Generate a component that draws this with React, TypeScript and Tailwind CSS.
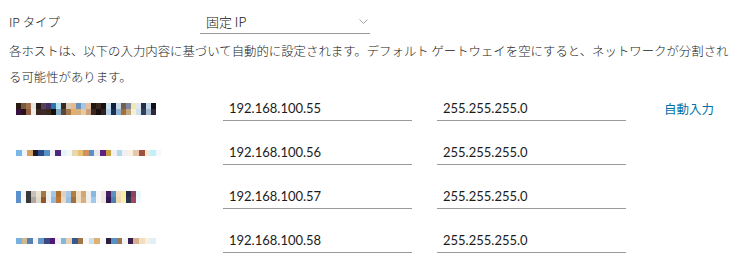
import React from "react"

const jp = "font-['Noto_Sans_CJK_JP',sans-serif] font-light"
const latin = "font-['Lato','Noto_Sans_CJK_JP',sans-serif]"

type Host = { ip: string; mask: string; top: string[]; bottom: string[] }

const hosts: Host[] = [
    {
        ip: "192.168.100.55",
        mask: "255.255.255.0",
        top: ["#2a1a14", "#7a5a3c", "#a07050", "#e8e4e0", "#201818", "#5a4050", "#40306a", "#2a78a8", "#b8e4f0", "#3a2a20", "#d8c8b0", "#e8b888", "#6890b8", "#a0c8e8", "#e8c0a0", "#201810", "#3a2820", "#181010", "#c8e0f0", "#102040", "#c8d8e8", "#706050", "#8088a0", "#f0e8b0", "#e0e8f0", "#203048", "#c8d8e8", "#101018"],
        bottom: ["#3a1040", "#2a1018", "#906040", "#f0ece8", "#3a2820", "#402830", "#3a2818", "#101010", "#80a8c0", "#5a4840", "#a87848", "#e0b070", "#d8b080", "#e8c8a0", "#c8a080", "#3a2820", "#181010", "#302020", "#b0d0e8", "#183050", "#90b0d0", "#a07040", "#c0a880", "#f8f0d0", "#d0e0f0", "#304058", "#a0b8d0", "#302838"],
    },
    {
        ip: "192.168.100.56",
        mask: "255.255.255.0",
        top: ["#78b8e8", "#f0f4f8", "#d8a060", "#1a1a2a", "#2a4a8a", "#5890c8", "#f0f4f8", "#502878", "#e0f4fa", "#f0f8f8", "#e8d8b0", "#e8c070", "#d09060", "#5890c8", "#e8e8e8", "#602080", "#c8a040", "#f0f0f0", "#b0d8f0", "#f0f0f0", "#f8f0e0", "#e8c8a8", "#a05040", "#f8e8d0", "#c0f0f8", "#f4f8fa"],
        bottom: [],
    },
    {
        ip: "192.168.100.57",
        mask: "255.255.255.0",
        top: ["#5890d0", "#f4f4f4", "#383838", "#c8c0b8", "#e8e0d0", "#a07840", "#f0f0f0", "#a0c8e8", "#b07030", "#e0d0c0", "#a8c8e8", "#b08040", "#f0e0c8", "#d0a870", "#f0f0f0", "#88b8e0", "#f8f8f8", "#f0e8e0", "#402060", "#6090c0", "#f0e0c0", "#f8f0a0", "#282848", "#904060", "#e8f8fa"],
        bottom: ["#6090c8", "#f8f8f8", "#383838", "#b0a8a0", "#e0d8c8", "#905828", "#f0f0f0", "#90b8e0", "#c07830", "#e8d8c8", "#98c0e0", "#a07040", "#f0e0c8", "#d8b080", "#f0f0f0", "#a0c8e8", "#f8f8f8", "#f0e8e0", "#301850", "#5080b0", "#f0d8b0", "#f8f0b0", "#303050", "#a04860", "#f0fafc"],
    },
    {
        ip: "192.168.100.58",
        mask: "255.255.255.0",
        top: ["#78b0e0", "#d0b890", "#5880b0", "#f4f4f4", "#6898c8", "#3a4a80", "#501878", "#f0f0f0", "#80b8e0", "#e8d0b0", "#3a5890", "#a07848", "#f8f8f8", "#c8e0f0", "#e0b070", "#f8f8f8", "#2a2040", "#5890c8", "#a07850", "#f4f4f4", "#3a2050", "#d8b090", "#f0e0c0", "#f8f0e0", "#e0f0f8"],
        bottom: [],
    },
]

function Mosaic({ top, bottom }: { top: string[]; bottom: string[] }) {
    const twoRows = bottom.length > 0
    return (
        <div className="flex flex-col">
            <div className="flex">
                {top.map((c, i) => (
                    <span key={i} className={twoRows ? "h-[6px] w-[5px]" : "h-[6px] w-[5.6px]"} style={{ backgroundColor: c }} />
                ))}
            </div>
            {twoRows && (
                <div className="flex">
                    {bottom.map((c, i) => (
                        <span key={i} className="h-[6px] w-[5px]" style={{ backgroundColor: c }} />
                    ))}
                </div>
            )}
        </div>
    )
}

function Field({ value }: { value: string }) {
    return (
        <div className={`flex h-6 items-center border-b border-[#9a9a9a] pl-[6px] text-[13px] text-[#1b1b1b] ${latin}`}>
            {value}
        </div>
    )
}

export default function App() {
    return (
        <div className="h-[268px] w-[752px] overflow-hidden bg-white pl-[9px] text-[#333]">
            <div className="flex items-center pt-[10px]">
                <span className={`w-[191px] text-[12.4px] text-[#222] ${jp}`}>IP タイプ</span>
                <div className="flex h-6 w-[170px] items-center justify-between border-b border-[#9a9a9a] pl-[6px] pr-[2px]">
                    <span className={`text-[13px] text-[#111] ${jp}`}>固定 IP</span>
                    <svg width="9" height="6" viewBox="0 0 9 6" fill="none" stroke="#9aa4a8" strokeWidth="1">
                        <path d="M0.5 0.5 L4.5 4.5 L8.5 0.5" />
                    </svg>
                </div>
            </div>

            <p className={`mt-[4px] text-[12.4px] leading-[26px] text-[#222] ${jp}`}>
                各ホストは、以下の入力内容に基づいて自動的に設定されます。デフォルト ゲートウェイを空にすると、ネットワークが分割され
                <br />
                る可能性があります。
            </p>

            <div className="mt-[7px] flex flex-col gap-5">
                {hosts.map((h, i) => (
                    <div key={h.ip} className="grid grid-cols-[214px_189px_25px_189px_38px_auto] items-end">
                        <div className="flex h-6 items-center pl-[7px]">
                            <Mosaic top={h.top} bottom={h.bottom} />
                        </div>
                        <Field value={h.ip} />
                        <div />
                        <Field value={h.mask} />
                        <div />
                        {i === 0 ? (
                            <button className="flex h-6 items-center font-['Noto_Sans_CJK_JP',sans-serif] text-[12.5px] font-normal text-[#0072a8]">
                                自動入力
                            </button>
                        ) : (
                            <div />
                        )}
                    </div>
                ))}
            </div>
        </div>
    )
}
